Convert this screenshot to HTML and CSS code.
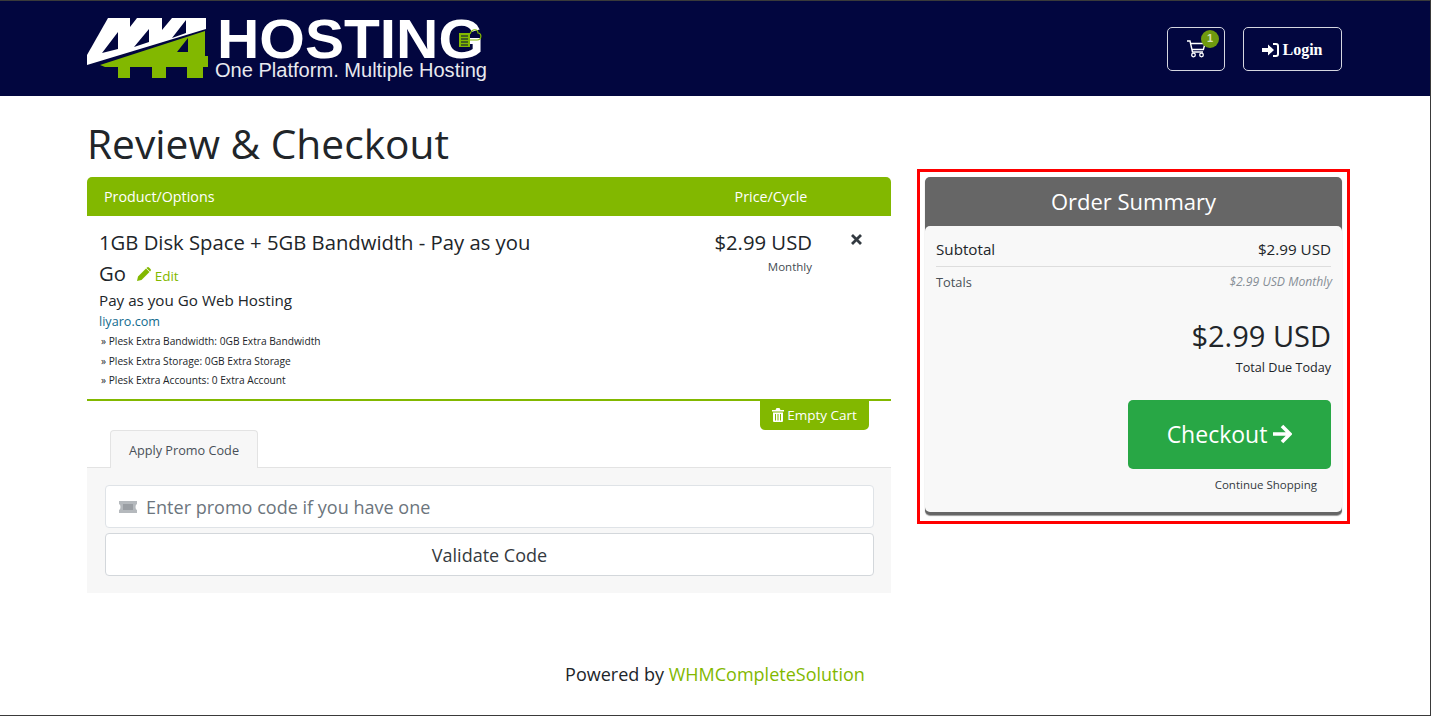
FILE: index.html
```html
<!DOCTYPE html>
<html lang="en">
<head>
    <meta charset="UTF-8">
    <meta name="viewport" content="width=device-width, initial-scale=1.0">
    <title>Review &amp; Checkout</title>
    <link rel="stylesheet" href="styles.css">
</head>
<body>
    <div class="frame">
        <header class="topbar">
            <svg class="logo" width="402" height="95" viewBox="87 1 402 95">
                <path fill="#ffffff" d="M87 55 L108 18 H206 V29 L87 65 Z"/>
                <path fill="#02063f" d="M102 53 L118 32 V49 Z M130 18 H137 L130 27 Z M134 47 L149 29 V42 Z M162 18 H172 L162 30 Z M172 38 L186 20 V33 Z"/>
                <path fill="#82b800" d="M100 65 L205 31 V56 H208 V67 H203 V78 H187 V67 H166 V78 H152 V67 H130 V78 H118 V67 H105 Z"/>
                <path fill="#02063f" d="M177 52 L188 38 V52 Z"/>
                <text class="logo-name" x="217" y="58" textLength="267" lengthAdjust="spacingAndGlyphs">HOSTING</text>
                <text class="logo-tag" x="215" y="76.500" textLength="272" lengthAdjust="spacingAndGlyphs">One Platform. Multiple Hosting</text>
                <path fill="#82b800" d="M459 33 H470 V47 H459 Z"/>
                <path stroke="#02063f" stroke-width="1" d="M461 36 H468 M461 39 H468 M461 42 H468 M461 45 H468"/>
                <path fill="none" stroke="#82b800" stroke-width="1.2" d="M470 34 C472 28 478 29 478 33 C482 33 482 40 477 40 H470"/>
            </svg>
            <nav class="topbar-actions">
                <a class="nav-btn cart-btn" href="#">
                    <svg width="19" height="18" viewBox="0 0 19 18"><path fill="none" stroke="#ffffff" stroke-width="1.4" d="M0 1 H3 L5.500 12 H16 M3.600 3.500 H18 L16.400 9.500 H4.900"/><circle cx="6.500" cy="15" r="1.800" fill="none" stroke="#ffffff" stroke-width="1.300"/><circle cx="14.500" cy="15" r="1.800" fill="none" stroke="#ffffff" stroke-width="1.300"/></svg>
                    <span class="badge">1</span>
                </a>
                <a class="nav-btn login-btn" href="#">
                    <svg width="17" height="14" viewBox="0 0 17 14"><path fill="#ffffff" d="M0 5 H6 V1.500 L12 7 L6 12.500 V9 H0 Z"/><path fill="none" stroke="#ffffff" stroke-width="2" d="M11 1 H14 Q16 1 16 3 V11 Q16 13 14 13 H11"/></svg>
                    Login
                </a>
            </nav>
        </header>

        <main class="page">
            <h1>Review &amp; Checkout</h1>
            <div class="columns">
                <section class="cart">
                    <div class="cart-head">
                        <span class="col-product">Product/Options</span>
                        <span class="col-price">Price/Cycle</span>
                    </div>
                    <div class="cart-item">
                        <div class="item-info">
                            <div class="item-title">1GB Disk Space + 5GB Bandwidth - Pay as you Go
                                <a class="edit-link" href="#"><svg width="14" height="14" viewBox="0 0 14 14"><path fill="#82b800" d="M0 14 L1 9.500 L9 1.500 L12.500 5 L4.500 13 Z M10 0.500 Q11 -0.300 12 0.500 L13.500 2 Q14.300 3 13.500 4 L13 4.500 L9.500 1 Z"/></svg> Edit</a>
                            </div>
                            <div class="item-group">Pay as you Go Web Hosting</div>
                            <div class="item-domain">liyaro.com</div>
                            <ul class="item-options">
                                <li>» Plesk Extra Bandwidth: 0GB Extra Bandwidth</li>
                                <li>» Plesk Extra Storage: 0GB Extra Storage</li>
                                <li>» Plesk Extra Accounts: 0 Extra Account</li>
                            </ul>
                        </div>
                        <div class="item-price">
                            <div class="price-value">$2.99 USD</div>
                            <div class="price-cycle">Monthly</div>
                        </div>
                        <div class="item-remove"><svg width="11" height="11" viewBox="0 0 11 11"><path stroke="#333a41" stroke-width="2.800" d="M1 1 L10 10 M10 1 L1 10"/></svg></div>
                    </div>
                    <div class="cart-tools">
                        <a class="empty-btn" href="#"><svg width="12" height="14" viewBox="0 0 12 14"><path fill="#ffffff" fill-rule="evenodd" d="M0 2 H3.500 L4.500 0 H7.500 L8.500 2 H12 V3.500 H0 Z M1 4.500 H11 V13 Q11 14 10 14 H2 Q1 14 1 13 Z M3 6 V12.500 H4 V6 Z M5.500 6 V12.500 H6.500 V6 Z M8 6 V12.500 H9 V6 Z"/></svg> Empty Cart</a>
                    </div>
                    <div class="tabs">
                        <span class="tab">Apply Promo Code</span>
                    </div>
                    <div class="tab-panel">
                        <div class="promo-field">
                            <svg width="18" height="12" viewBox="0 0 18 12"><path fill="#b5b9bd" d="M0 0 H18 V3 Q16.500 3.500 16.500 6 Q16.500 8.500 18 9 V12 H0 V9 Q1.500 8.500 1.500 6 Q1.500 3.500 0 3 Z"/><path fill="#9a9ea3" d="M4 3 H14 V9 H4 Z"/></svg>
                            <span>Enter promo code if you have one</span>
                        </div>
                        <button class="validate-btn" type="button">Validate Code</button>
                    </div>
                </section>

                <aside class="summary-outline">
                    <div class="summary">
                        <h2>Order Summary</h2>
                        <div class="summary-body">
                            <div class="summary-row subtotal"><span>Subtotal</span><span>$2.99 USD</span></div>
                            <div class="summary-row totals"><span>Totals</span><em>$2.99 USD Monthly</em></div>
                            <div class="grand-total">$2.99 USD</div>
                            <div class="due-today">Total Due Today</div>
                            <a class="checkout-btn" href="#">Checkout <svg width="20" height="20" viewBox="0 0 20 20"><path fill="none" stroke="#ffffff" stroke-width="3.600" d="M1 10 H18 M10 2 L18 10 L10 18"/></svg></a>
                            <a class="continue-link" href="#">Continue Shopping</a>
                        </div>
                    </div>
                </aside>
            </div>
        </main>

        <footer class="site-footer">Powered by <a href="#">WHMCompleteSolution</a></footer>
    </div>
</body>
</html>
```

FILE: styles.css
```css
* {
    box-sizing: border-box;
}
body {
    margin: 0;
    font-family: "Open Sans", "Noto Sans", sans-serif;
    color: #212529;
    background-color: #ffffff;
}
a {
    text-decoration: none;
}
.frame {
    height: 716px;
    overflow: hidden;
    border-top: 1px solid #3a3a3a;
    border-right: 1px solid #3a3a3a;
    border-bottom: 1px solid #3a3a3a;
}
.topbar {
    height: 95px;
    background-color: #02063f;
    display: flex;
    justify-content: space-between;
    align-items: flex-start;
    padding: 0 88px 0 87px;
}
.logo {
    display: block;
}
.logo-name {
    font-family: "Liberation Sans", Arial, sans-serif;
    font-weight: 700;
    font-size: 56px;
    fill: #ffffff;
}
.logo-tag {
    font-family: "Liberation Sans", Arial, sans-serif;
    font-size: 19.500px;
    fill: #e9e9ef;
}
.topbar-actions {
    display: flex;
    gap: 18px;
    padding-top: 26px;
}
.nav-btn {
    position: relative;
    height: 44px;
    display: flex;
    align-items: center;
    justify-content: center;
    border: 1px solid #d5d6e0;
    border-radius: 5px;
    color: #ffffff;
}
.cart-btn {
    width: 58px;
}
.login-btn {
    width: 99px;
    gap: 3px;
    padding-top: 2px;
    font-family: "Liberation Serif", serif;
    font-weight: 700;
    font-size: 16px;
}
.badge {
    position: absolute;
    top: 2px;
    left: 33px;
    width: 18px;
    height: 18px;
    border-radius: 50%;
    background-color: #6f9a0f;
    color: #d6e3b8;
    font-family: "Liberation Sans", sans-serif;
    font-size: 11px;
    font-weight: 700;
    line-height: 16px;
    text-align: center;
}
.page {
    padding: 0 81px 0 87px;
}
h1 {
    margin: 0;
    height: 81px;
    padding-top: 20px;
    font-weight: 400;
    font-size: 40.700px;
    line-height: 55px;
}
.columns {
    display: flex;
    align-items: flex-start;
    gap: 26px;
}
.cart {
    width: 804px;
    flex: none;
}
.cart-head {
    height: 39px;
    display: flex;
    align-items: center;
    border-radius: 5px 5px 0 0;
    background-color: #82b800;
    color: #ffffff;
    font-size: 14.300px;
}
.col-product {
    width: 600px;
    padding-left: 17px;
}
.col-price {
    width: 168px;
    text-align: center;
}
.cart-item {
    height: 185px;
    display: flex;
    padding: 11px 0 0 12px;
    border-bottom: 2px solid #82b800;
}
.item-info {
    width: 448px;
}
.item-title {
    font-size: 20.260px;
    line-height: 31px;
}
.edit-link {
    margin-left: 6px;
    color: #82b800;
    font-size: 13.500px;
    line-height: 1;
}
.item-group {
    font-size: 15.200px;
    line-height: 22px;
}
.item-domain {
    font-size: 12.600px;
    line-height: 18px;
    color: #126b8e;
    padding-top: 2px;
}
.item-options {
    margin: 1px 0 0;
    padding: 0 0 0 2px;
    list-style: none;
    font-size: 10.200px;
    line-height: 19.500px;
}
.item-price {
    width: 265px;
    text-align: right;
    padding-top: 3px;
}
.price-value {
    font-size: 20.300px;
    line-height: 25px;
}
.price-cycle {
    font-size: 11.500px;
    line-height: 24px;
    color: #444b52;
}
.item-remove {
    padding: 1px 0 0 39px;
}
.cart-tools {
    height: 29px;
    display: flex;
    justify-content: flex-end;
    padding-right: 22px;
}
.empty-btn {
    width: 109px;
    display: flex;
    align-items: center;
    justify-content: center;
    gap: 3px;
    padding-bottom: 2px;
    border-radius: 0 0 5px 5px;
    background-color: #82b800;
    color: #ffffff;
    font-size: 13.500px;
}
.tabs {
    height: 38px;
    padding-left: 23px;
    border-bottom: 1px solid #e3e3e3;
}
.tab {
    display: block;
    width: 148px;
    height: 38px;
    border: 1px solid #e3e3e3;
    border-bottom: 0;
    border-radius: 4px 4px 0 0;
    background-color: #f7f7f7;
    color: #495057;
    font-size: 12.700px;
    line-height: 38px;
    text-align: center;
}
.tab-panel {
    height: 125px;
    padding: 17px 17px 0 18px;
    background-color: #f7f7f7;
}
.promo-field,
.validate-btn {
    width: 100%;
    border: 1px solid #dfe3e7;
    border-radius: 4px;
    background-color: #ffffff;
}
.promo-field {
    height: 43px;
    display: flex;
    align-items: center;
    gap: 9px;
    padding-left: 13px;
    color: #6c757d;
    font-size: 18.050px;
}
.validate-btn {
    display: block;
    height: 43px;
    margin-top: 5px;
    border-color: #d3d7db;
    font-family: inherit;
    color: #343a40;
    font-size: 18px;
}
.summary-outline {
    width: 433px;
    flex: none;
    margin-top: -8px;
    padding: 5px 5px 6px;
    border: 3px solid #ff0000;
}
.summary {
    width: 417px;
    border-radius: 5px;
    background-color: #666666;
    padding-bottom: 3px;
    box-shadow: 0 1px 1px #999999;
}
.summary h2 {
    margin: 0;
    height: 49px;
    color: #ffffff;
    font-weight: 400;
    font-size: 22px;
    line-height: 49px;
    text-align: center;
}
.summary-body {
    height: 286px;
    padding: 12px 11px 0;
    border-radius: 5px;
    background-color: #f8f8f8;
}
.summary-row {
    display: flex;
    justify-content: space-between;
}
.subtotal {
    height: 29px;
    border-bottom: 1px solid #dddddd;
    font-size: 15.200px;
    line-height: 22px;
}
.totals {
    padding-top: 6px;
    font-size: 12.800px;
    line-height: 18px;
    color: #495057;
}
.totals em {
    font-size: 12.200px;
    color: #868e96;
    margin-right: -1px;
}
.grand-total {
    margin-top: 26px;
    font-size: 29px;
    line-height: 38px;
    text-align: right;
}
.due-today {
    margin-top: 4px;
    font-size: 12.600px;
    line-height: 18px;
    text-align: right;
}
.checkout-btn {
    width: 203px;
    height: 69px;
    margin: 23px 0 0 auto;
    display: flex;
    align-items: center;
    justify-content: center;
    gap: 5px;
    padding-bottom: 2px;
    border-radius: 5px;
    background-color: #28a745;
    color: #ffffff;
    font-size: 23px;
}
.continue-link {
    display: block;
    margin-top: 8px;
    padding-right: 14px;
    color: #343a40;
    font-size: 11.500px;
    line-height: 16px;
    text-align: right;
}
.site-footer {
    margin-top: 68px;
    text-align: center;
    font-size: 18px;
    line-height: 26px;
}
.site-footer a {
    color: #82b800;
}
```
